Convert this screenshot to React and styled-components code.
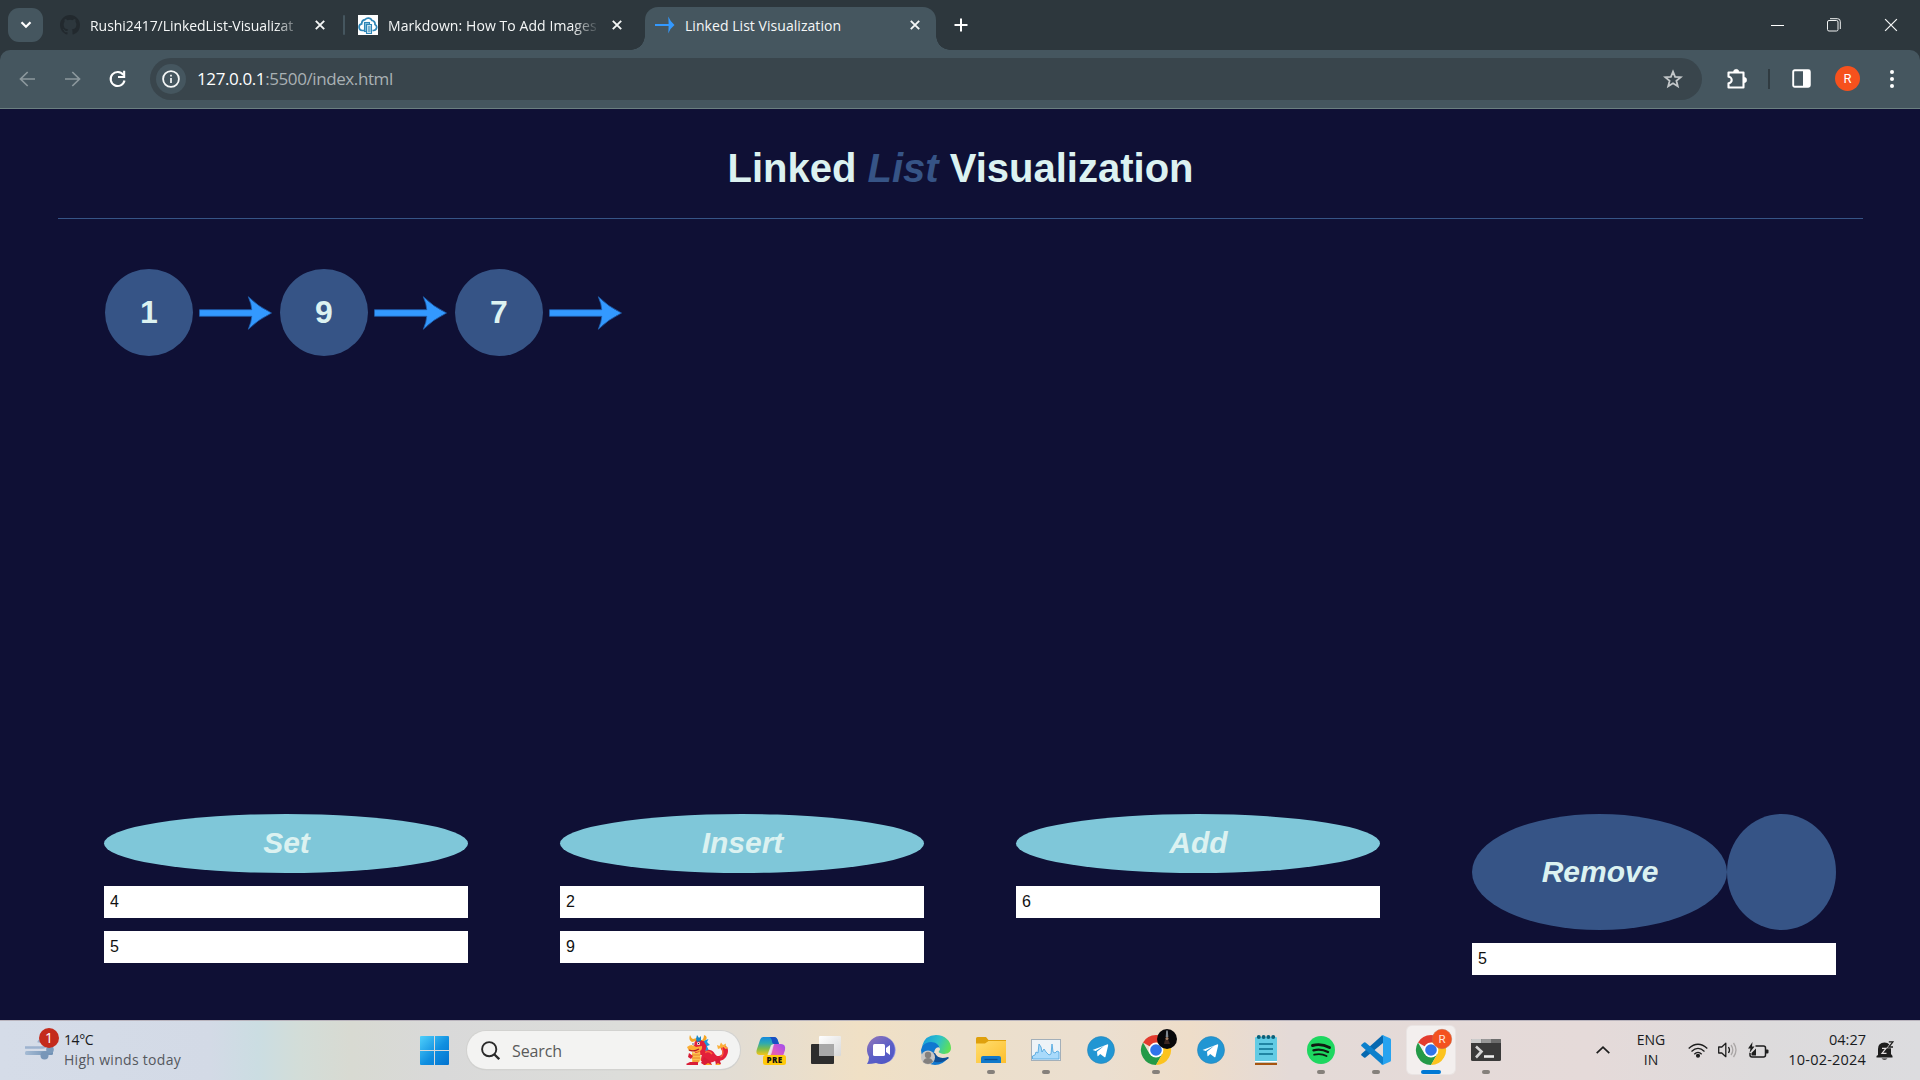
import React from "react";
import styled, { createGlobalStyle, css } from "styled-components";

const GlobalStyle = createGlobalStyle`
  * { box-sizing: border-box; }
  html, body { margin: 0; padding: 0; background: #0f1035; }
  body { width: 1920px; height: 1080px; overflow: hidden; }
  svg { display: block; flex: none; }
`;

const ui = `"Open Sans", "Noto Sans", sans-serif`;
const arial = `"Liberation Sans", Arial, sans-serif`;

const Screen = styled.div`
  display: flex;
  flex-direction: column;
  width: 1920px;
  height: 1080px;
  font-family: ${ui};
`;

/* ---------- browser chrome ---------- */

const TabStrip = styled.div`
  display: flex;
  height: 50px;
  background: #2d373d;
`;

const TabSearch = styled.div`
  display: flex;
  align-items: center;
  justify-content: center;
  width: 35px;
  height: 34px;
  margin: 8px 7px 0 8px;
  border-radius: 11px;
  background: #45565f;
`;

const Tab = styled.div`
  position: relative;
  display: flex;
  align-items: center;
  width: ${(p) => p.$w}px;
  height: ${(p) => (p.$active ? 43 : 50)}px;
  margin-top: ${(p) => (p.$active ? 7 : 0)}px;
  padding: 0 ${(p) => p.$pr}px 0 10px;
  ${(p) =>
    p.$active &&
    css`
      padding-bottom: 7px;
      border-radius: 13px 13px 0 0;
      background: #45565f;
      &::before,
      &::after {
        content: "";
        position: absolute;
        bottom: 0;
        width: 14px;
        height: 14px;
      }
      &::before {
        left: -14px;
        background: radial-gradient(circle at 0 0, transparent 13.5px, #45565f 14px);
      }
      &::after {
        right: -14px;
        background: radial-gradient(circle at 100% 0, transparent 13.5px, #45565f 14px);
      }
    `}
`;

const TabTitle = styled.span`
  flex: 1;
  margin: 1px 12px 0 10px;
  white-space: nowrap;
  font-size: 14px;
  line-height: 20px;
  letter-spacing: ${(p) => p.$ls}px;
  color: #f5f7f7;
  ${(p) =>
    p.$fade &&
    css`
      mask-image: linear-gradient(to right, #000 calc(100% - 28px), transparent);
    `}
`;

const TabDivider = styled.div`
  width: 2px;
  height: 20px;
  margin: 15px 3px 0 5px;
  border-radius: 1px;
  background: #45565f;
`;

const NewTab = styled.div`
  margin: 18px 0 0 18px;
`;

const WindowControls = styled.div`
  display: flex;
  align-items: center;
  gap: 43px;
  height: 49px;
  margin-left: auto;
  padding-right: 22px;
`;

const ToolbarBack = styled.div`
  height: 59px;
  background: #2d373d;
`;

const Toolbar = styled.div`
  display: flex;
  align-items: center;
  height: 59px;
  padding: 0 18px 1px 17px;
  border-bottom: 1px solid #6b7f80;
  border-radius: 10px 10px 0 0;
  background: #45565f;
`;

const NavButtons = styled.div`
  display: flex;
  gap: 24px;
  width: 133px;
`;

const Omnibox = styled.div`
  display: flex;
  align-items: center;
  width: 1552px;
  height: 42px;
  padding: 0 19px 0 6px;
  border-radius: 21px;
  background: #39454c;
`;

const SiteInfo = styled.div`
  display: flex;
  align-items: center;
  justify-content: center;
  width: 30px;
  height: 30px;
  border-radius: 50%;
  background: #45565f;
`;

const Url = styled.span`
  flex: 1;
  padding: 1px 0 0 11px;
  font-size: 17px;
  line-height: 24px;
  letter-spacing: -0.4px;
  color: #a9b1b4;
  b {
    font-weight: 400;
    color: #ffffff;
  }
`;

const ToolbarActions = styled.div`
  display: flex;
  align-items: center;
  flex: 1;
  padding-left: 24px;
`;

const ToolbarDivider = styled.div`
  width: 2px;
  height: 20px;
  margin: 0 22px 0 20px;
  background: #303b41;
`;

const Avatar = styled.div`
  display: flex;
  align-items: center;
  justify-content: center;
  width: 25px;
  height: 25px;
  margin: 0 30px 0 24px;
  border-radius: 50%;
  background: #f6511d;
  color: #fff;
  font: 400 13px Roboto, sans-serif;
`;

/* ---------- page ---------- */

const Page = styled.main`
  display: flex;
  flex-direction: column;
  height: 911px;
  padding: 36px 57px 0 58px;
  background: #0f1035;
  font-family: ${arial};
`;

const Title = styled.h1`
  height: 74px;
  margin: 0;
  border-bottom: 1px solid #365486;
  text-align: center;
  font-size: 40px;
  line-height: 46px;
  font-weight: 700;
  color: #dcf2f1;
  em {
    color: #365486;
  }
`;

const NodeList = styled.div`
  display: flex;
  height: 595px;
  padding: 50px 0 0 47px;
`;

const ListNode = styled.div`
  display: flex;
  align-items: center;
  width: 175px;
  height: 87px;
`;

const NodeValue = styled.div`
  width: 88px;
  height: 87px;
  margin-right: 6px;
  border-radius: 50%;
  background: #365486;
  text-align: center;
  font-size: 32px;
  line-height: 86px;
  font-weight: 700;
  color: #dcf2f1;
`;

const Controls = styled.div`
  display: flex;
  gap: 92px;
  padding-left: 46px;
`;

const Control = styled.div`
  display: flex;
  flex-direction: column;
  gap: 13px;
  width: 364px;
`;

const ButtonRow = styled.div`
  display: flex;
`;

const ActionButton = styled.button`
  width: ${(p) => p.$w}px;
  height: ${(p) => p.$h}px;
  padding: 0 0 ${(p) => p.$lift || 0}px 1px;
  border: 0;
  border-radius: 50%;
  background: ${(p) => (p.$dark ? "#365486" : "#7fc7d9")};
  color: #dcf2f1;
  font: italic 700 30px ${arial};
`;

const Field = styled.input`
  width: 364px;
  height: 32px;
  padding: 0 6px 1px;
  border: 0;
  border-radius: 0;
  outline: 0;
  background: #fff;
  color: #111;
  font: 16px ${arial};
`;

/* ---------- taskbar ---------- */

const Taskbar = styled.footer`
  display: flex;
  height: 60px;
  border-top: 1px solid #b9b4bd;
  background: linear-gradient(
    to right,
    #d5dce8 0,
    #d3dae6 210px,
    #cbdde2 258px,
    #d3ddd8 300px,
    #d8dad2 350px,
    #d9d9d9 440px,
    #dcddda 620px,
    #e3ddd3 740px,
    #f0e0c5 860px,
    #ecdfcb 960px,
    #ebdfd0 1100px,
    #eeddc9 1190px,
    #e4dad7 1290px,
    #e5dad9 1590px,
    #dddbdc 1760px,
    #dcdcdf 1920px
  );
`;

const Weather = styled.div`
  display: flex;
  width: 410px;
  padding: 7px 0 0 24px;
`;

const WeatherIcon = styled.div`
  width: 40px;
`;

const WeatherText = styled.div`
  padding-top: 2px;
`;

const Line = styled.div`
  white-space: nowrap;
  font-size: ${(p) => p.$size || 14}px;
  line-height: 20px;
  letter-spacing: ${(p) => p.$ls || 0}px;
  color: ${(p) => p.$color || "#191b1e"};
`;

const Slot = styled.div`
  position: relative;
  display: flex;
  align-items: center;
  justify-content: center;
  width: 48px;
  height: 48px;
  margin: 5px ${(p) => p.$gap ?? 7}px 0 0;
  border-radius: 5px;
  ${(p) =>
    p.$active &&
    css`
      background: #f3efee;
      box-shadow: 0 0 0 1px #e9e4e3;
    `}
  &::after {
    content: "";
    position: absolute;
    bottom: 0;
    left: 50%;
    width: ${(p) => (p.$active ? 20 : p.$running ? 8 : 0)}px;
    height: 4px;
    border-radius: 2px;
    transform: translateX(-50%);
    background: ${(p) => (p.$active ? "#0078d4" : "#85807b")};
  }
`;

const SearchBox = styled.div`
  display: flex;
  align-items: center;
  width: 273px;
  height: 38px;
  margin: 10px 7px 0 0;
  padding: 0 11px 0 14px;
  border-radius: 19px;
  background: #f3f3f2;
  box-shadow: 0 0 0 1px #d2d2d0, 0 1px 1px #bbb;
`;

const SearchText = styled.span`
  flex: 1;
  padding: 1px 0 0 12px;
  font-size: 16px;
  line-height: 22px;
  letter-spacing: -0.1px;
  color: #5a5a5a;
`;

const Tray = styled.div`
  display: flex;
  align-items: center;
  height: 58px;
  margin-left: auto;
  padding-right: 26px;
`;

const TrayText = styled.div`
  width: ${(p) => p.$w}px;
  margin-right: ${(p) => p.$mr || 0}px;
  text-align: ${(p) => p.$align};
`;

const StatusIcons = styled.div`
  display: flex;
  align-items: center;
  gap: 10px;
  margin-left: -4px;
`;

/* ---------- drawings ---------- */

const Cross = ({ size = 10, w = 1.9, color = "#f4f6f6" }) => (
  <svg width={size} height={size} viewBox="0 0 10 10">
    <path d="M.8.8 9.2 9.2M9.2.8.8 9.2" stroke={color} strokeWidth={w} />
  </svg>
);

const GitHub = () => (
  <svg width="20" height="20" viewBox="0 0 16 16" fill="#22292e">
    <path d="M8 0C3.58 0 0 3.58 0 8c0 3.54 2.29 6.53 5.47 7.59.4.07.55-.17.55-.38 0-.19-.01-.82-.01-1.49-2.01.37-2.53-.49-2.69-.94-.09-.23-.48-.94-.82-1.13-.28-.15-.68-.52-.01-.53.63-.01 1.08.58 1.23.82.72 1.21 1.87.87 2.33.66.07-.52.28-.87.51-1.07-1.78-.2-3.64-.89-3.64-3.95 0-.87.31-1.59.82-2.15-.08-.2-.36-1.02.08-2.12 0 0 .67-.21 2.2.82a7.6 7.6 0 0 1 4 0c1.53-1.04 2.2-.82 2.2-.82.44 1.1.16 1.92.08 2.12.51.56.82 1.27.82 2.15 0 3.07-1.87 3.75-3.65 3.95.29.25.54.73.54 1.48 0 1.07-.01 1.93-.01 2.2 0 .21.15.46.55.38A8 8 0 0 0 16 8c0-4.42-3.58-8-8-8Z" />
  </svg>
);

const CloudDocs = () => (
  <svg width="20" height="20" viewBox="0 0 20 20">
    <rect width="20" height="20" fill="#fff" />
    <path d="M6 15.500H4.200A3.400 3.400 0 0 1 3.700 8.800 4 4 0 0 1 7 4.700 4.200 4.200 0 0 1 14 5.500a3.500 3.500 0 0 1 3 4 3.200 3.200 0 0 1-1.500 6H14.500" fill="none" stroke="#2f86b7" strokeWidth="1.700" />
    <rect x="6.500" y="7.500" width="5" height="9" fill="#7fbddb" stroke="#2f86b7" strokeWidth="1.100" />
    <path d="M8.500 9.500h5v9h-5z" fill="#c5e2ef" stroke="#2f86b7" strokeWidth="1.100" />
    <path d="M10 12h2.500M10 14h2.500M10 16h2.500" stroke="#2f86b7" />
  </svg>
);

const ArrowShape = ({ w, h }) => (
  <svg width={w} height={h} viewBox="0 0 73 34" preserveAspectRatio="none">
    <path d="M.5 13.700H52.800Q52.500 8 49.300.7Q59 10.500 72.500 17Q59 23.500 49.300 33.300Q52.500 26 52.800 20.300H.5Z" fill="#3399ff" stroke="#1f5fae" strokeWidth=".8" />
  </svg>
);

const TabArrow = () => (
  <svg width="20" height="20" viewBox="0 0 20 20">
    <path d="M0 8.900h13.600Q13.600 5.500 13.200 1.600Q15.500 7 19.500 10Q15.500 13 13.200 18.400Q13.600 14.500 13.600 11.100H0Z" fill="#3399ff" />
  </svg>
);

const NavArrow = ({ flip }) => (
  <svg width="21" height="20" viewBox="0 0 20 20">
    <path
      d="M10.200 3 3 10l7.200 7M3.400 10H17.500"
      transform={flip ? "matrix(-1 0 0 1 20 0)" : undefined}
      fill="none"
      stroke="#8c989d"
      strokeWidth="1.700"
    />
  </svg>
);

const Reload = () => (
  <svg width="21" height="20" viewBox="0 0 20 20">
    <path d="M15.900 6A7 7 0 1 0 17 11.500" fill="none" stroke="#fff" strokeWidth="2.100" />
    <path d="M17.700 1.800v7.200h-7.200V6.900h5.100V1.800Z" fill="#fff" />
  </svg>
);

const Info = () => (
  <svg width="18" height="18" viewBox="0 0 18 18">
    <circle cx="9" cy="9" r="7.900" fill="none" stroke="#f5f7f7" strokeWidth="1.800" />
    <path d="M9 8v5M9 4.800v1.800" stroke="#f5f7f7" strokeWidth="1.700" />
  </svg>
);

const Star = () => (
  <svg width="20" height="20" viewBox="0 0 20 20">
    <path d="m10 2.600 2.100 5.200 5.600.4-4.300 3.600 1.400 5.500L10 14.300l-4.800 3 1.400-5.500L2.300 8.200l5.600-.4Z" fill="none" stroke="#c3c7c9" strokeWidth="1.800" />
  </svg>
);

const Puzzle = () => (
  <svg width="22" height="22" viewBox="0 0 22 22">
    <path d="M2.500 4.500H17.500V19.500H2.500V15.200A3.200 3.200 0 0 0 2.500 8.800Z" fill="none" stroke="#fff" strokeWidth="2.100" strokeLinejoin="round" />
    <path d="M7.500 4a2.700 2.700 0 0 1 5.400 0ZM18 9.300a2.700 2.700 0 0 1 0 5.400Z" fill="#fff" stroke="#fff" strokeWidth=".5" />
  </svg>
);

const SidePanel = () => (
  <svg width="19" height="19" viewBox="0 0 19 19">
    <rect x="1.200" y="1.200" width="16.600" height="16.600" rx="1.500" fill="none" stroke="#fff" strokeWidth="1.900" />
    <path d="M11 1h7v17h-7z" fill="#fff" />
  </svg>
);

const Dots = () => (
  <svg width="4" height="18" viewBox="0 0 4 18" fill="#fff">
    <circle cx="2" cy="2" r="2" />
    <circle cx="2" cy="9" r="2" />
    <circle cx="2" cy="16" r="2" />
  </svg>
);

const Wind = () => (
  <svg width="40" height="36" viewBox="0 0 40 36">
    <defs>
      <linearGradient id="wind" x1="0" x2="1">
        <stop offset="0" stopColor="#a5bbd4" />
        <stop offset="1" stopColor="#6d8fb3" />
      </linearGradient>
    </defs>
    <path d="M1 19.500h17a4 4 0 1 0-3.500-5" fill="none" stroke="#9db3cf" strokeWidth="2.600" />
    <rect x="1" y="23" width="28" height="4" rx="1.500" fill="url(#wind)" />
    <circle cx="26" cy="21.500" r="3.800" fill="#7b9abb" />
    <circle cx="20.500" cy="27.500" r="4" fill="#7896b8" />
    <circle cx="25" cy="10" r="10" fill="#c42b1c" />
    <text x="25" y="15" textAnchor="middle" fill="#fff" fontSize="14" fontFamily="Open Sans">1</text>
  </svg>
);

const WindowsLogo = () => (
  <svg width="29" height="29" viewBox="0 0 29 29">
    <defs>
      <linearGradient id="win" x1="0" y1="0" x2="29" y2="29" gradientUnits="userSpaceOnUse">
        <stop offset="0" stopColor="#4fd0fb" />
        <stop offset=".55" stopColor="#108fe0" />
        <stop offset="1" stopColor="#0272cf" />
      </linearGradient>
    </defs>
    <path d="M1 0h13v14H0V1a1 1 0 0 1 1-1ZM15 0h13a1 1 0 0 1 1 1v13H15ZM0 15h14v14H1a1 1 0 0 1-1-1ZM15 15h14v13a1 1 0 0 1-1 1H15Z" fill="url(#win)" />
  </svg>
);

const Magnifier = () => (
  <svg width="19" height="19" viewBox="0 0 19 19">
    <circle cx="8.200" cy="8.200" r="7.100" fill="none" stroke="#292929" strokeWidth="1.900" />
    <path d="m13.200 13.200 5 5" stroke="#292929" strokeWidth="2.300" />
  </svg>
);

const Dragon = () => (
  <svg width="43" height="31" viewBox="0 0 43 31">
    <path d="M15 26C15 18 19 14 24 15c5 1 5 7 9 6 4-1 4-4 2-7-1-2 0-4 3-4 4 1 5 6 3 10-2 5-7 7-12 6-3 2-9 3-14 0Z" fill="#e3203a" />
    <path d="M38 11q-3 1-1.500 4 1.500 5-2 7" fill="none" stroke="#fa6a3c" strokeWidth="1.300" />
    <path d="m32 14-1-4 2.500 1L35 7.500l2 2.500 3-1.500-.5 3 3 1.500-3 1-2-2Z" fill="#fbb03a" />
    <path d="M19 17.500q4-2.500 7 1.500" fill="none" stroke="#fa6a3c" strokeWidth="1.500" />
    <path d="m17 6 5.500-2-1.500 3 3 3-3 1 1.500 4-4.500 1Z" fill="#1b98dd" />
    <path d="M6 12 10 5h7l3.500 6-2 9H10Z" fill="#e3203a" />
    <path d="M4 0q1 3 3 4l4-1-1 3-4 1Q2 5 4 0ZM18 0q0 4-3 6h3q4-2 2-5Z" fill="#f5a623" />
    <path d="m10 4 1-4 2 3 2-2v5l-4 1Z" fill="#1886c4" />
    <path d="M1 12q5-4 9 0l6-1q1 5-5 6l-8-1Z" fill="#fbae35" />
    <path d="M3 15q5 2 10-1" fill="none" stroke="#b5172b" strokeWidth="1.200" />
    <circle cx="7" cy="9" r="1.500" fill="#fff" />
    <circle cx="12.500" cy="8.500" r="1.500" fill="#fff" />
    <circle cx="7" cy="9" r=".7" fill="#123" />
    <circle cx="12.500" cy="8.500" r=".7" fill="#123" />
    <path d="M6 17q6 2 8-1l1 9-4 4-5-2Z" fill="#fdc04e" />
    <path d="M6 20h8M6 23h8M7 26h6" stroke="#e8842a" />
    <path d="m3 18 4 3-2 3-3-2ZM0 29l4-2h8v3H1ZM18 22l6 4 2 4h-8l-3-2ZM29 25l4-2 2 6-5 1Z" fill="#d91c36" />
    <path d="M19 30l3-2 4 2M29 30l3-2 3 2" fill="#fba52a" />
  </svg>
);

const Copilot = () => (
  <svg width="30" height="29" viewBox="0 0 30 29">
    <defs>
      <linearGradient id="cpA" x1="0" y1="0" x2="0" y2="1">
        <stop offset="0" stopColor="#1489dd" />
        <stop offset=".35" stopColor="#2eaab0" />
        <stop offset=".65" stopColor="#7dbb4c" />
        <stop offset="1" stopColor="#f5c518" />
      </linearGradient>
      <linearGradient id="cpB" x1="1" y1="0" x2="0" y2="1">
        <stop offset="0" stopColor="#9c4df0" />
        <stop offset=".45" stopColor="#dc5ac4" />
        <stop offset="1" stopColor="#ff7a4a" />
      </linearGradient>
    </defs>
    <path d="M7 1h11q3 0 4 4l1 3h-4q-3 0-4 3l-3 8H4Q-1 19 1 13L4 4Q5 1 7 1Z" fill="url(#cpA)" />
    <path d="M13 1h5q3 0 4 4l1 3h-5q-2 0-2-3-1-4-3-4Z" fill="#184fc3" />
    <path d="M19 8h6q5 0 4 6l-3 9q-1 3-5 3h-9q-3 0-2-2 3-1 4-5l2-7q1-4 3-4Z" fill="url(#cpB)" />
    <path d="m15 9-4 11h2q2 0 3-4l2-8Z" fill="#ebeae9" opacity=".8" />
    <rect x="7" y="19" width="23" height="10" rx="2.500" fill="#ffc90c" />
    <text x="18.500" y="27" textAnchor="middle" fontFamily="Open Sans" fontWeight="800" fontSize="8" letterSpacing=".4" fill="#111">PRE</text>
  </svg>
);

const TaskView = () => (
  <svg width="30" height="28" viewBox="0 0 30 28">
    <defs>
      <linearGradient id="tv" x1="0" y1="0" x2="1" y2="1">
        <stop offset="0" stopColor="#fff" />
        <stop offset="1" stopColor="#d8d8d8" />
      </linearGradient>
    </defs>
    <rect y="8" width="23" height="20" rx="1" fill="#2d2d2d" />
    <rect x="8" y="0" width="22" height="20" rx="1" fill="url(#tv)" />
    <rect x="8" y="8" width="15" height="12" fill="#a8a8a8" />
  </svg>
);

const Chat = () => (
  <svg width="29" height="28" viewBox="0 0 29 28">
    <defs>
      <linearGradient id="chat" x1="0" y1="0" x2=".7" y2="1">
        <stop offset="0" stopColor="#9477b8" />
        <stop offset=".6" stopColor="#5b5fc7" />
        <stop offset="1" stopColor="#5057c5" />
      </linearGradient>
    </defs>
    <path d="M15 0a14 14 0 1 1-6 27q-4 1-9 1 2-3 2-7A14 14 0 0 1 15 0Z" fill="url(#chat)" />
    <path d="M15 0A14 14 0 0 1 21 26.500q8-7 6-17Q24 1 15 0Z" fill="#7b83eb" opacity=".6" />
    <rect x="6" y="8" width="12" height="12" rx="1.500" fill="#fff" />
    <path d="m19 12 4-3v10l-4-3Z" fill="#fff" />
  </svg>
);

const Edge = () => (
  <svg width="30" height="30" viewBox="0 0 30 30">
    <defs>
      <linearGradient id="eg" x1="0" y1=".2" x2="1" y2=".5">
        <stop offset="0" stopColor="#159bdc" />
        <stop offset=".55" stopColor="#2dc1c9" />
        <stop offset="1" stopColor="#5fe057" />
      </linearGradient>
    </defs>
    <path d="M0 15Q2 6 9 5.500c7 0 10 5 10 9 0-3-3-3-5 0-3 6 2 12 13 8Q22 30 14 30 1 29 0 15Z" fill="#1078d0" />
    <path d="M9 21c1 7 11 9 19 2l-1-1Q17 25 14 18 10 18 9 21Z" fill="#0f4f95" />
    <path d="M1 11Q4 0 15 0c9 0 15 6 15 13 0 6-7 7-11 5-3-1 0-2 0-4C18 7 8 4 1 11Z" fill="url(#eg)" />
    <circle cx="7" cy="22.500" r="7" fill="#c9c7c5" />
    <circle cx="7" cy="20" r="3.200" fill="#83807e" />
    <path d="M2 27q1-4 5-4t5 4q-5 4-10 0Z" fill="#83807e" />
  </svg>
);

const Folder = () => (
  <svg width="30" height="26" viewBox="0 0 30 26">
    <defs>
      <linearGradient id="fo" x1="0" y1="0" x2="1" y2="1">
        <stop offset="0" stopColor="#ffdd6f" />
        <stop offset="1" stopColor="#fdbf2d" />
      </linearGradient>
    </defs>
    <path d="M0 1.500Q0 0 1.500 0H10l2.500 3H30v6H0Z" fill="#dfa00c" />
    <path d="M0 6.500h9L12.500 4H30v22H0Z" fill="url(#fo)" />
    <path d="M5 26v-5q0-2 2-2h16q2 0 2 2v5Z" fill="#1179ca" />
    <path d="M8.500 22.500h13" stroke="#0b4f91" strokeWidth="1.300" />
  </svg>
);

const Monitor = () => (
  <svg width="30" height="22" viewBox="0 0 30 22">
    <rect x=".5" y=".5" width="29" height="21" fill="#eef3f7" stroke="#a3afb9" />
    <path d="M1.500 17 4 16l1-3 2 1 1-9 2 3 1 5 2-3 2 3 3 3 2-1 1-10 1 8 2 1 2-2 2 1v7H1.500Z" fill="#a9dafb" stroke="#55a9e0" strokeWidth=".9" />
  </svg>
);

const Telegram = () => (
  <svg width="28" height="28" viewBox="0 0 28 28">
    <circle cx="14" cy="14" r="13.500" fill="#2196d3" stroke="#2784b8" strokeWidth=".6" />
    <path d="m5.500 14 14.500-5.600q1.500-.4 1.100 1.300l-2.600 11q-.3 1-1.300.4l-4-3-2 2q-.7.6-.8-.5l-.4-3.800 7.500-6.300-8.800 5.500-3-1Z" fill="#fff" />
  </svg>
);

const Chrome = ({ children }) => (
  <svg width="30" height="30" viewBox="0 0 30 30" overflow="visible">
    <path d="M15 15 2 7.500A15 15 0 0 1 28 7.500Z" fill="#e33b2e" />
    <path d="M2 7.500A15 15 0 0 0 15 30l6.500-11.300L15 15 8.500 18.700Z" fill="#249a48" />
    <path d="M28 7.500A15 15 0 0 1 15 30l6.500-11.300L20.500 8Z" fill="#fcc31e" />
    <path d="M15 7.500H28L22 14Z" fill="#fcc31e" />
    <circle cx="15" cy="15" r="7.400" fill="#fff" />
    <circle cx="15" cy="15" r="5.800" fill="#2f74ea" />
    {children}
  </svg>
);

const PhotoBadge = () => (
  <g>
    <circle cx="26" cy="4" r="10" fill="#08080b" />
    <path d="M25.200-4.500h1.600l.5 6.500h-2.600Z" fill="#7f8790" />
    <path d="M23 9q1-6 3-5t3 5" fill="#3a2522" />
    <circle cx="26" cy="3.500" r="1.500" fill="#a98266" />
  </g>
);

const LetterBadge = () => (
  <g>
    <circle cx="26" cy="4" r="9.700" fill="#f4511e" stroke="#c46a4c" strokeWidth=".6" />
    <text x="26" y="8.200" textAnchor="middle" fontFamily="Roboto" fontSize="11.500" fill="#ffe3da">R</text>
  </g>
);

const Notepad = () => (
  <svg width="22" height="30" viewBox="0 0 22 30">
    <rect y="2" width="22" height="26" rx="1" fill="#62cbe4" />
    <path d="M0 27.500h22V30H0Z" fill="#a6540f" />
    <path d="M0 26h22v1.500H0Z" fill="#fff" />
    <path d="M4 9h14M4 14h14M4 19h14" stroke="#0b6f8d" strokeWidth="1.700" />
    <g fill="#0b6079">
      <circle cx="3.800" cy="2" r="2" />
      <circle cx="8.600" cy="2" r="2" />
      <circle cx="13.400" cy="2" r="2" />
      <circle cx="18.200" cy="2" r="2" />
    </g>
  </svg>
);

const Spotify = () => (
  <svg width="28" height="28" viewBox="0 0 28 28">
    <circle cx="14" cy="14" r="14" fill="#1ed760" />
    <g fill="none" stroke="#101a12" strokeLinecap="round">
      <path d="M5.500 9.500Q14 7 22.500 11.500" strokeWidth="2.900" />
      <path d="M6.500 14.300Q14 12.300 21 16" strokeWidth="2.400" />
      <path d="M7.200 18.700Q14 17 19.500 20" strokeWidth="1.900" />
    </g>
  </svg>
);

const VSCode = () => (
  <svg width="30" height="30" viewBox="0 0 30 30">
    <path d="M22.500.4 22 8 4.500 22.500q-.8.600-1.500 0L.6 20.400q-.9-.8 0-1.700L21 .4Z" fill="#0668b0" />
    <path d="M22.500 29.600 22 22 4.500 7.500q-.8-.6-1.500 0L.6 9.600q-.9.800 0 1.700L21 29.600Z" fill="#0c80cc" />
    <path d="M22 .2 29 3.300q1 .5 1 1.500v20.400q0 1-1 1.500L22 29.800q-1 .4-1.800-.5.800.3 1.800-.8v-27Q21.500.500 20.200.7 21-.2 22 .2Z" fill="#27a3f0" />
  </svg>
);

const Terminal = () => (
  <svg width="30" height="22" viewBox="0 0 30 22">
    <rect width="30" height="22" rx="1.500" fill="#3a3a3a" />
    <path d="M1 0h9.500v4H0V1q0-1 1-1Z" fill="#cbcbcb" />
    <path d="M10.500 0H20v4h-9.500Z" fill="#979797" />
    <path d="M20 0h9q1 0 1 1v3H20Z" fill="#6c6c6c" />
    <path d="m5 7.500 5.500 5-5.500 6" fill="none" stroke="#d5d5d5" strokeWidth="2.600" />
    <path d="M13 17.500h10" stroke="#eee" strokeWidth="2.600" />
  </svg>
);

const Wifi = () => (
  <svg width="20" height="15" viewBox="0 0 20 15" fill="none" stroke="#1d1d1d" strokeWidth="1.300">
    <path d="M.7 5.500Q10-3 19.300 5.500M3.500 8.500Q10 2.300 16.500 8.500M6.300 11.200Q10 7.500 13.700 11.200" />
    <circle cx="10" cy="12.700" r="1.400" fill="#1d1d1d" />
  </svg>
);

const Speaker = () => (
  <svg width="20" height="16" viewBox="0 0 20 16" fill="none" stroke="#1d1d1d" strokeWidth="1.300">
    <path d="M.7 5H3.800L7.800 1.300V14.700L3.800 11H.7Z" strokeLinejoin="round" />
    <path d="M10.500 5q2 3 0 6" />
    <path d="M13 3q3.600 5 0 10M15.500 1q5 7 0 14" stroke="#aaa6a6" />
  </svg>
);

const Battery = () => (
  <svg width="21" height="17" viewBox="0 0 21 17">
    <path d="M7.500 4h8q2 0 2 2v7q0 2-2 2H4q-2 0-2-2v-2" fill="none" stroke="#1d1d1d" strokeWidth="1.500" />
    <path d="M18 7.500h1.500q1 0 1 1V10.500q0 1-1 1H18Z" fill="#1d1d1d" />
    <path d="M4.500 0 0 6.500h2.500L1.500 11 6.500 4.500H4ZM3.500 13.500V11L8 6.500v7Z" fill="#1d1d1d" />
  </svg>
);

const Bell = () => (
  <svg width="18" height="19" viewBox="0 0 18 19">
    <path d="M2 14V8q0-6.500 6.500-6.500Q15 2 15 8v5l1.500 2v1.500H.5V15Z" fill="#1d1d1d" />
    <path d="M5.500 17.500h6q-3 2.600-6 0Z" fill="#1d1d1d" />
    <path d="M6 7.300h4L6 12.300h4.500" fill="none" stroke="#e4dfe0" strokeWidth="1.200" />
    <path d="M12.800.8H17L12.800 6H17" fill="none" stroke="#dddcdd" strokeWidth="2.400" />
    <path d="M12.800.8H17L12.800 6H17" fill="none" stroke="#1d1d1d" strokeWidth="1.300" />
  </svg>
);

/* ---------- data ---------- */

const nodes = [1, 9, 7];

const pinned = [
  { id: "copilot", icon: <Copilot /> },
  { id: "taskview", icon: <TaskView /> },
  { id: "chat", icon: <Chat /> },
  { id: "edge", icon: <Edge /> },
  { id: "files", icon: <Folder />, running: true },
  { id: "monitor", icon: <Monitor />, running: true },
  { id: "telegram", icon: <Telegram /> },
  { id: "chrome", icon: <Chrome><PhotoBadge /></Chrome>, running: true },
  { id: "telegram2", icon: <Telegram /> },
  { id: "notepad", icon: <Notepad /> },
  { id: "spotify", icon: <Spotify />, running: true },
  { id: "vscode", icon: <VSCode />, running: true },
  { id: "chrome2", icon: <Chrome><LetterBadge /></Chrome>, active: true },
  { id: "terminal", icon: <Terminal />, running: true },
];

function Browser() {
  return (
    <>
      <TabStrip>
        <TabSearch>
          <svg width="12" height="8" viewBox="0 0 12 8">
            <path d="m1.500 1.200 4.500 4.600 4.500-4.600" fill="none" stroke="#fff" strokeWidth="2.200" />
          </svg>
        </TabSearch>
        <Tab $w={288} $pr={13}>
          <GitHub />
          <TabTitle $fade $ls={-0.05}>Rushi2417/LinkedList-Visualizat</TabTitle>
          <Cross />
        </Tab>
        <TabDivider />
        <Tab $w={297} $pr={23}>
          <CloudDocs />
          <TabTitle $fade $ls={0.08}>Markdown: How To Add Images</TabTitle>
          <Cross />
        </Tab>
        <Tab $w={291} $pr={16} $active>
          <TabArrow />
          <TabTitle $ls={0.05}>Linked List Visualization</TabTitle>
          <Cross />
        </Tab>
        <NewTab>
          <svg width="14" height="14" viewBox="0 0 14 14">
            <path d="M7 .5v13M.5 7h13" stroke="#fff" strokeWidth="2" />
          </svg>
        </NewTab>
        <WindowControls>
          <svg width="13" height="14" viewBox="0 0 13 14">
            <path d="M0 7.500h13" stroke="#fff" />
          </svg>
          <svg width="14" height="14" viewBox="0 0 14 14" fill="none" stroke="#f0f2f2">
            <rect x=".5" y="2.500" width="10.500" height="10.500" rx="1.500" />
            <path d="M3 .7h7.500q2.800 0 2.800 2.800V11" />
          </svg>
          <Cross size={14} w={0.9} />
        </WindowControls>
      </TabStrip>
      <ToolbarBack>
        <Toolbar>
          <NavButtons>
            <NavArrow />
            <NavArrow flip />
            <Reload />
          </NavButtons>
          <Omnibox>
            <SiteInfo>
              <Info />
            </SiteInfo>
            <Url>
              <b>127.0.0.1</b>:5500/index.html
            </Url>
            <Star />
          </Omnibox>
          <ToolbarActions>
            <Puzzle />
            <ToolbarDivider />
            <SidePanel />
            <Avatar>R</Avatar>
            <Dots />
          </ToolbarActions>
        </Toolbar>
      </ToolbarBack>
    </>
  );
}

function Visualizer() {
  return (
    <Page>
      <Title>
        Linked <em>List</em> Visualization
      </Title>
      <NodeList>
        {nodes.map((n) => (
          <ListNode key={n}>
            <NodeValue>{n}</NodeValue>
            <ArrowShape w={73} h={34} />
          </ListNode>
        ))}
      </NodeList>
      <Controls>
        <Control>
          <ActionButton $w={364} $h={59} $lift={1}>Set</ActionButton>
          <Field defaultValue="4" />
          <Field defaultValue="5" />
        </Control>
        <Control>
          <ActionButton $w={364} $h={59} $lift={1}>Insert</ActionButton>
          <Field defaultValue="2" />
          <Field defaultValue="9" />
        </Control>
        <Control>
          <ActionButton $w={364} $h={59} $lift={2}>Add</ActionButton>
          <Field defaultValue="6" />
        </Control>
        <Control>
          <ButtonRow>
            <ActionButton $w={255} $h={116} $lift={1} $dark>Remove</ActionButton>
            <ActionButton $w={109} $h={116} $dark />
          </ButtonRow>
          <Field defaultValue="5" />
        </Control>
      </Controls>
    </Page>
  );
}

function SystemTaskbar() {
  return (
    <Taskbar>
      <Weather>
        <WeatherIcon>
          <Wind />
        </WeatherIcon>
        <WeatherText>
          <Line $ls={-0.4}>14°C</Line>
          <Line $color="#55585e" $ls={0.3}>High winds today</Line>
        </WeatherText>
      </Weather>
      <Slot $gap={9}>
        <WindowsLogo />
      </Slot>
      <SearchBox>
        <Magnifier />
        <SearchText>Search</SearchText>
        <Dragon />
      </SearchBox>
      {pinned.map((p) => (
        <Slot key={p.id} $running={p.running} $active={p.active}>
          {p.icon}
        </Slot>
      ))}
      <Tray>
        <svg width="14" height="8" viewBox="0 0 14 8">
          <path d="m.7 7.200 6.300-6 6.300 6" fill="none" stroke="#1d1d1d" strokeWidth="1.700" />
        </svg>
        <TrayText $w={82} $align="center">
          <Line>ENG</Line>
          <Line>IN</Line>
        </TrayText>
        <StatusIcons>
          <Wifi />
          <Speaker />
          <Battery />
        </StatusIcons>
        <TrayText $w={97} $mr={10} $align="right">
          <Line $size={14.5}>04:27</Line>
          <Line $size={14.5} $ls={0.2}>10-02-2024</Line>
        </TrayText>
        <Bell />
      </Tray>
    </Taskbar>
  );
}

export default function App() {
  return (
    <Screen>
      <GlobalStyle />
      <Browser />
      <Visualizer />
      <SystemTaskbar />
    </Screen>
  );
}
